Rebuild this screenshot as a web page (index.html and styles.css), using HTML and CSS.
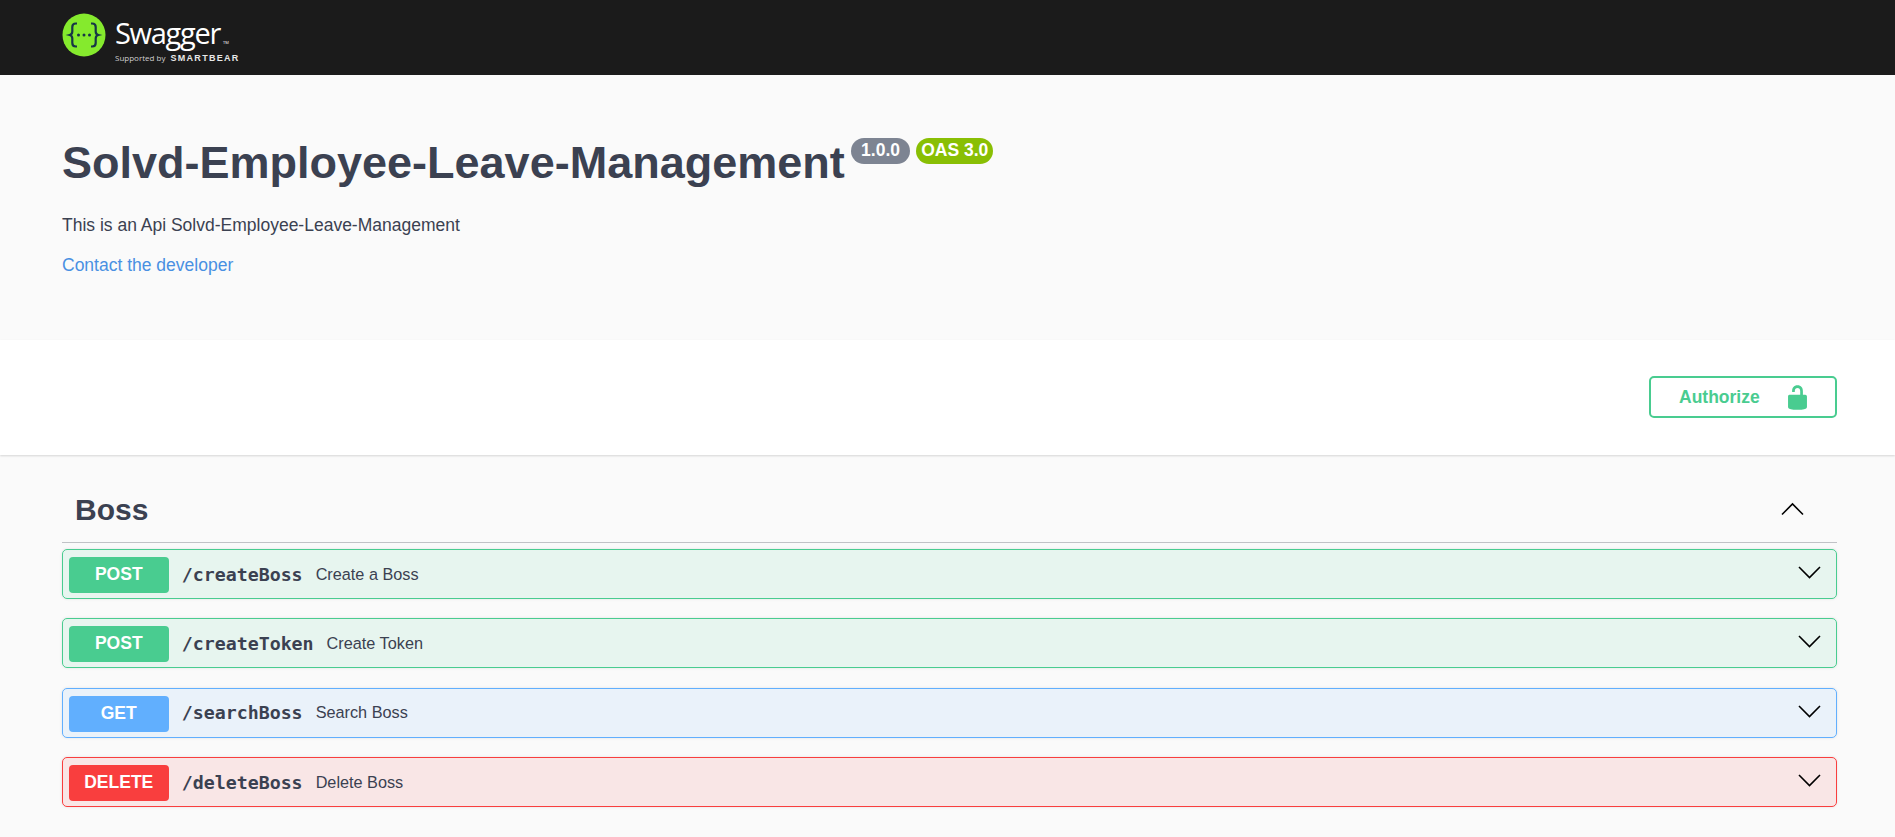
FILE: index.html
```html
<!DOCTYPE html>
<html lang="en">
<head>
  <meta charset="UTF-8">
  <title>Swagger UI</title>
  <link rel="stylesheet" href="styles.css">
</head>
<body>
  <div class="topbar">
    <a class="logo" href="#">
      <svg class="logo-mark" viewBox="0 0 44 44" width="44" height="44">
        <circle cx="22" cy="22" r="21.5" fill="#85ea2d"/>
        <path d="M15 10.5h-1.2c-2.4 0-3.5 1.2-3.5 3.4v4.6c0 2-.8 3-2.600 3.500 1.800.5 2.600 1.500 2.600 3.500v4.600c0 2.200 1.100 3.400 3.500 3.400H15" fill="none" stroke="#173647" stroke-width="2.2"/>
        <path d="M29 10.500h1.200c2.400 0 3.500 1.200 3.500 3.400v4.600c0 2 .8 3 2.600 3.500-1.800.5-2.600 1.500-2.600 3.500v4.600c0 2.200-1.100 3.400-3.500 3.400H29" fill="none" stroke="#173647" stroke-width="2.200"/>
        <circle cx="16.500" cy="22" r="1.500" fill="#173647"/>
        <circle cx="22" cy="22" r="1.500" fill="#173647"/>
        <circle cx="27.500" cy="22" r="1.500" fill="#173647"/>
      </svg>
      <span class="logo-text">
        <span class="logo-name">Swagger<small>TM</small></span>
        <span class="logo-sub">Supported by <b>SMARTBEAR</b></span>
      </span>
    </a>
  </div>

  <div class="info">
    <div class="title-row">
      <h2>Solvd-Employee-Leave-Management</h2>
      <span class="badge badge-version">1.0.0</span>
      <span class="badge badge-oas">OAS 3.0</span>
    </div>
    <p class="description">This is an Api Solvd-Employee-Leave-Management</p>
    <a class="contact" href="#">Contact the developer</a>
  </div>

  <div class="scheme">
    <button class="authorize" type="button">
      <span>Authorize</span>
      <svg viewBox="0 0 20 20" width="27" height="27"><path d="M15.800 8H14V5.600C14 2.703 12.665 1 10 1 7.334 1 6 2.703 6 5.600V6h2v-.801C8 3.754 8.797 3 10 3c1.203 0 2 .754 2 2.199V8H4c-.553 0-1 .646-1 1.199V17c0 .549.428 1.139.951 1.307l1.197.387C5.672 18.861 6.450 19 7 19h6c.550 0 1.328-.139 1.852-.306l1.197-.387c.524-.168.951-.758.951-1.307V9.199C17 8.646 16.352 8 15.800 8z" fill="#49cc90"/></svg>
    </button>
  </div>

  <div class="operations">
    <div class="tag">
      <h3>Boss</h3>
      <svg class="chevron" viewBox="0 0 25 25" width="25" height="25"><polyline points="2,17.500 12.500,7 23,17.500"/></svg>
    </div>

    <div class="op op-post">
      <span class="method">POST</span>
      <span class="path">/createBoss</span>
      <span class="summary">Create a Boss</span>
      <svg class="chevron" viewBox="0 0 25 25" width="25" height="25"><polyline points="2,7 12.500,17.500 23,7"/></svg>
    </div>
    <div class="op op-post">
      <span class="method">POST</span>
      <span class="path">/createToken</span>
      <span class="summary">Create Token</span>
      <svg class="chevron" viewBox="0 0 25 25" width="25" height="25"><polyline points="2,7 12.500,17.500 23,7"/></svg>
    </div>
    <div class="op op-get">
      <span class="method">GET</span>
      <span class="path">/searchBoss</span>
      <span class="summary">Search Boss</span>
      <svg class="chevron" viewBox="0 0 25 25" width="25" height="25"><polyline points="2,7 12.500,17.500 23,7"/></svg>
    </div>
    <div class="op op-delete">
      <span class="method">DELETE</span>
      <span class="path">/deleteBoss</span>
      <span class="summary">Delete Boss</span>
      <svg class="chevron" viewBox="0 0 25 25" width="25" height="25"><polyline points="2,7 12.500,17.500 23,7"/></svg>
    </div>
  </div>
</body>
</html>
```

FILE: styles.css
```css
html, body {
  margin: 0;
  height: 100%;
  overflow: hidden;
}
body {
  background: #fafafa;
  color: #3b4151;
  font-family: "Liberation Sans", Arial, sans-serif;
}

.topbar {
  background: #1b1b1b;
  height: 75px;
  box-sizing: border-box;
  padding: 13px 62px 0;
}
.logo {
  display: flex;
  align-items: flex-start;
  gap: 9px;
  color: #fff;
  text-decoration: none;
}
.logo-text {
  display: flex;
  flex-direction: column;
}
.logo-name {
  font-family: "Open Sans", sans-serif;
  font-size: 29px;
  line-height: 38px;
  letter-spacing: -1.300px;
  font-weight: 400;
  margin-top: 1px;
}
.logo-name small {
  font-size: 4px;
  line-height: 0;
  letter-spacing: 0;
  margin-left: 3px;
}
.logo-sub {
  font-family: "Open Sans", sans-serif;
  font-size: 8px;
  line-height: 12px;
  color: #cfcfcf;
  white-space: nowrap;
}
.logo-sub b {
  font-family: "Liberation Sans", sans-serif;
  font-size: 9px;
  letter-spacing: 1.300px;
  color: #e8e8e8;
  margin-left: 3px;
}

.info {
  height: 265px;
  box-sizing: border-box;
  padding: 59px 62px 0;
}
.title-row {
  display: flex;
  align-items: flex-start;
}
.title-row h2 {
  margin: 0 6.400px 0 0;
  font-size: 45px;
  line-height: 58px;
  font-weight: bold;
}
.badge {
  height: 26px;
  line-height: 25px;
  margin-top: 4px;
  padding: 0 10px;
  border-radius: 14px;
  color: #fff;
  font-size: 17.500px;
  font-weight: bold;
  white-space: nowrap;
}
.badge-version {
  background: #7d8492;
}
.badge-oas {
  background: #89bf04;
  margin-left: 6.200px;
  padding: 0 5px;
}
.description {
  margin: 21px 0 0;
  font-size: 17.500px;
  line-height: 25px;
}
.contact {
  display: block;
  margin-top: 15px;
  font-size: 17.500px;
  line-height: 25px;
  color: #4990e2;
  text-decoration: none;
}

.scheme {
  background: #fff;
  height: 115px;
  box-sizing: border-box;
  padding: 36px 58px 0 62px;
  display: flex;
  justify-content: flex-end;
  box-shadow: 0 1px 2px rgba(0, 0, 0, 0.15);
}
.authorize {
  width: 188px;
  height: 42px;
  box-sizing: border-box;
  padding: 0 0 0 28px;
  display: flex;
  align-items: center;
  gap: 24px;
  background: transparent;
  border: 2.500px solid #49cc90;
  border-radius: 5px;
  color: #49cc90;
  font-family: "Liberation Sans", sans-serif;
  font-size: 17.500px;
  font-weight: bold;
}

.operations {
  padding: 0 58px 0 62px;
}
.tag {
  height: 88px;
  box-sizing: border-box;
  margin-bottom: 6px;
  padding: 37px 32px 0 13px;
  display: flex;
  justify-content: space-between;
  border-bottom: 1px solid rgba(59, 65, 81, 0.3);
}
.tag h3 {
  margin: 0;
  font-size: 30px;
  line-height: 36px;
  font-weight: bold;
}
.tag .chevron {
  margin-top: 5px;
}
.chevron polyline {
  fill: none;
  stroke: #000;
  stroke-width: 1.600;
}
.op {
  height: 50px;
  box-sizing: border-box;
  margin-bottom: 19.400px;
  padding: 0 14px 0 5.750px;
  display: flex;
  align-items: center;
  border: 1.250px solid;
  border-radius: 5px;
  box-shadow: 0 0 3px rgba(0, 0, 0, 0.1);
}
.method {
  width: 100px;
  height: 36px;
  line-height: 34px;
  margin-top: 2px;
  flex-shrink: 0;
  border-radius: 4px;
  color: #fff;
  font-size: 17.500px;
  font-weight: bold;
  text-align: center;
}
.path {
  margin-left: 13px;
  font-family: "DejaVu Sans Mono", monospace;
  font-size: 18.250px;
  font-weight: bold;
}
.summary {
  margin-left: 13px;
  font-size: 16.250px;
  flex: 1;
}
.op .chevron {
  margin-top: -3px;
}
.op-post {
  background: rgba(73, 204, 144, 0.1);
  border-color: #49cc90;
}
.op-post .method {
  background: #49cc90;
}
.op-get {
  background: rgba(97, 175, 254, 0.1);
  border-color: #61affe;
}
.op-get .method {
  background: #61affe;
}
.op-delete {
  background: rgba(249, 62, 62, 0.1);
  border-color: #f93e3e;
}
.op-delete .method {
  background: #f93e3e;
}
```
